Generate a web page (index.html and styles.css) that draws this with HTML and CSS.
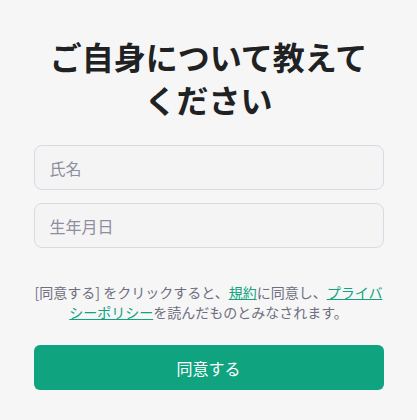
FILE: index.html
```html
<!DOCTYPE html>
<html>
<head>
  <title>ご自身について教えてください</title>
  <link rel="stylesheet" href="styles.css">
</head>
<body>
  <div class="container">
    <h1>ご自身について教えてください</h1>

    <div class="fields">
      <input type="text" class="field" placeholder="氏名">
      <input type="text" class="field" placeholder="生年月日">
    </div>

    <p class="terms">[同意する] をクリックすると、<a href="#">規約</a>に同意し、<a href="#">プライバシーポリシー</a>を読んだものとみなされます。</p>

    <button class="agree">同意する</button>
  </div>
</body>
</html>
```

FILE: styles.css
```css
body {
  background: #f6f6f6;
  margin: 0;
  padding: 0;
  font-family: "Noto Sans CJK JP", "Noto Sans", sans-serif;
  color: #202123;
}

.container {
  max-width: 350px;
  margin: 0 auto;
  padding-top: 35px;
}

h1 {
  text-align: center;
  font-size: 32px;
  font-weight: 700;
  line-height: 43px;
  margin: 0 0 24px;
  padding: 0 8px;
}

.fields {
  display: flex;
  flex-direction: column;
  gap: 13px;
}

.field {
  box-sizing: border-box;
  width: 100%;
  height: 45px;
  padding: 0 15px;
  border: 1px solid #d9d9e3;
  border-radius: 8px;
  background: #f4f4f4;
  font-family: inherit;
  font-size: 16px;
  color: #202123;
  outline: none;
}

.field::placeholder {
  color: #8e8ea0;
}

.terms {
  margin: 34px 0 23px;
  text-align: center;
  font-size: 14px;
  line-height: 20px;
  color: #6e6e80;
}

.terms a {
  color: #10a37f;
  text-decoration: underline;
}

.agree {
  display: block;
  width: 100%;
  height: 45px;
  border: none;
  border-radius: 6px;
  background-color: #10a37f;
  color: white;
  font-family: inherit;
  font-size: 16px;
  cursor: pointer;
}
```
